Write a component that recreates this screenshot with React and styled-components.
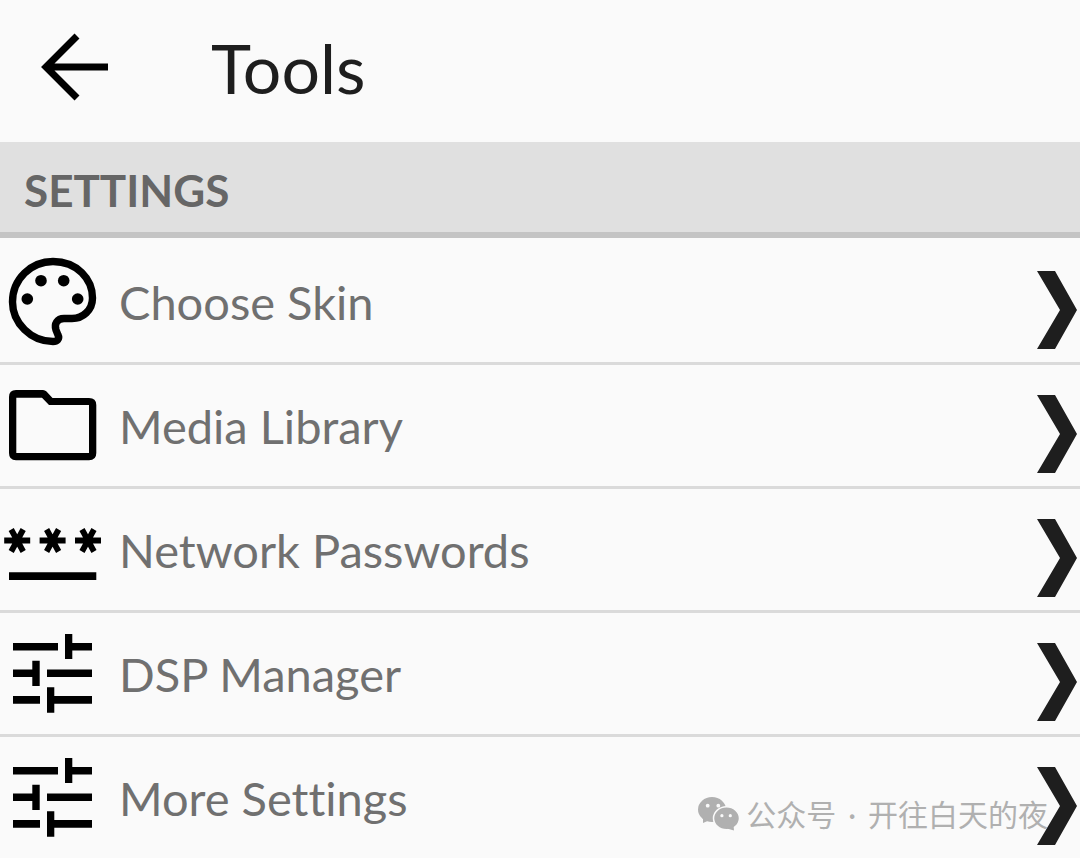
import React from "react";
import styled, { createGlobalStyle } from "styled-components";

const PaletteIcon = () => (
  <Icon viewBox="0 0 105 106" aria-hidden="true">
    <path
      d="M53 12.5C77 12.5 92.5 30 92.5 49C92.5 61 83 69.5 72 69.5H64C57 69.5 54 75 56 81L58 86C60 90 57 92.5 53 92.5C31 92.5 12.5 74 12.5 53C12.5 30 31 12.5 53 12.5Z"
      fill="none"
      stroke="#000"
      strokeWidth="7.4"
    />
    <circle cx="41" cy="31.7" r="5.8" />
    <circle cx="63.7" cy="31.7" r="5.8" />
    <circle cx="27.3" cy="50" r="5.8" />
    <circle cx="77.7" cy="50" r="5.8" />
  </Icon>
);

const FolderIcon = () => (
  <Icon viewBox="0 0 105 106" aria-hidden="true">
    <path
      fillRule="evenodd"
      d="M16 17H43Q45 17 46.5 18.5L52.5 25H89Q96.3 25 96.3 32V80Q96.3 87.3 89 87.3H16Q9 87.3 9 80V24Q9 17 16 17ZM16.3 24.7V80H89V32H49L42 24.7Z"
    />
  </Icon>
);

const PasswordIcon = () => (
  <Icon viewBox="0 0 105 106" aria-hidden="true">
    {[17.2, 52.6, 88].map((x) => (
      <path
        key={x}
        d={`M${x - 13} 43.500h26M${x - 6} 32.500l12 22M${x + 6} 32.500l-12 22`}
        stroke="#000"
        strokeWidth="5.8"
      />
    ))}
    <path d="M9 75.3h87.3v7.7H9z" />
  </Icon>
);

const TuneIcon = () => (
  <Icon viewBox="0 0 105 106" aria-hidden="true">
    <path d="M13 22h45v7.6H13zM65 13h7.3v9H92v7.6H72.3V38H65z" />
    <path d="M13 48.4h19.3v-8.7h7.4V65h-7.4v-9H13zM47 48.4h45V56H47z" />
    <path d="M13 75h27v7.7H13zM47 66.3h7.3V75H92v7.7H54.3v9H47z" />
  </Icon>
);

const WechatIcon = () => (
  <WechatSvg viewBox="0 0 42 34" aria-hidden="true">
    <ellipse cx="14" cy="12.5" rx="14" ry="12.5" />
    <path d="M5 20v6l7-3z" />
    <ellipse
      cx="28.5"
      cy="21.3"
      rx="13"
      ry="11.500"
      stroke="#fafafa"
      strokeWidth="1.500"
    />
    <path d="M29 31.500l7 2-.5-5z" />
    <g fill="#fafafa">
      <circle cx="9.7" cy="8.7" r="1.900" />
      <circle cx="20.3" cy="8.7" r="1.900" />
      <circle cx="23.900" cy="18.7" r="1.600" />
      <circle cx="32.3" cy="18.7" r="1.600" />
    </g>
  </WechatSvg>
);

const items = [
  { label: "Choose Skin", icon: <PaletteIcon /> },
  { label: "Media Library", icon: <FolderIcon /> },
  { label: "Network Passwords", icon: <PasswordIcon /> },
  { label: "DSP Manager", icon: <TuneIcon /> },
  { label: "More Settings", icon: <TuneIcon /> },
];

export default function App() {
  return (
    <Page>
      <GlobalStyle />
      <Header>
        <BackButton type="button" aria-label="Back">
          <svg width="68" height="68" viewBox="0 0 68 68">
            <path
              d="M36 3L5 34l31 31M7 34h60"
              fill="none"
              stroke="#000"
              strokeWidth="7"
            />
          </svg>
        </BackButton>
        <Title>Tools</Title>
      </Header>

      <SectionTitle>SETTINGS</SectionTitle>
      <List>
        {items.map((item) => (
          <Item key={item.label}>
            <Row href="#">
              {item.icon}
              <Label>{item.label}</Label>
              <Chevron viewBox="0 0 40 78" aria-hidden="true">
                <path d="M0 0h18l22 39-22 39H0l23-39z" />
              </Chevron>
            </Row>
          </Item>
        ))}
      </List>

      <Watermark>
        <WechatIcon />
        <WatermarkText>
          <span>公众号</span>
          <span>·</span>
          <span>开往白天的夜</span>
        </WatermarkText>
      </Watermark>
    </Page>
  );
}

const GlobalStyle = createGlobalStyle`
  * {
    box-sizing: border-box;
  }
  body {
    margin: 0;
    background: #fafafa;
    font-family: Lato, "Noto Sans CJK SC", sans-serif;
    font-variant-ligatures: no-common-ligatures;
  }
`;

const Page = styled.main`
  position: relative;
`;

const Header = styled.header`
  display: flex;
  align-items: center;
  gap: 102px;
  height: 142px;
  padding: 0 41px 8px;
`;

const BackButton = styled.button`
  display: flex;
  padding: 0;
  border: none;
  background: none;
  cursor: pointer;
`;

const Title = styled.h1`
  margin: 0;
  padding-top: 2px;
  color: #1e1e1e;
  font-size: 68px;
  font-weight: 400;
  line-height: 80px;
`;

const SectionTitle = styled.h2`
  margin: 0;
  padding: 20px 24px 14px;
  border-bottom: 6px solid #c4c4c4;
  background: #e0e0e0;
  color: #666;
  font-size: 44px;
  font-weight: 700;
  line-height: 56px;
`;

const List = styled.ul`
  margin: 0;
  padding: 3px 0 0;
  list-style: none;
`;

const Item = styled.li`
  border-bottom: 3px solid #dadada;

  &:last-child {
    border-bottom: none;
  }
`;

const Row = styled.a`
  display: flex;
  align-items: center;
  height: 121px;
  padding-right: 3px;
  color: #707070;
  text-decoration: none;
`;

const Icon = styled.svg`
  flex: none;
  width: 105px;
  height: 106px;
  fill: #000;
`;

const Label = styled.span`
  flex: 1;
  padding: 0 14px;
  font-size: 47px;
  line-height: 56px;
`;

const Chevron = styled.svg`
  /* sits above the watermark */
  position: relative;
  z-index: 1;
  flex: none;
  box-sizing: content-box;
  width: 40px;
  height: 78px;
  padding-top: 17px;
  fill: #1e1e1e;
`;

const Watermark = styled.div`
  position: absolute;
  right: 32px;
  bottom: 24px;
  display: flex;
  align-items: center;
  gap: 6px;
  color: #b0b0b0;
  font-size: 30px;
  line-height: 40px;
  pointer-events: none;
`;

const WatermarkText = styled.div`
  display: flex;
  gap: 12px;
`;

const WechatSvg = styled.svg`
  width: 42px;
  height: 34px;
  fill: #b0b0b0;
`;
